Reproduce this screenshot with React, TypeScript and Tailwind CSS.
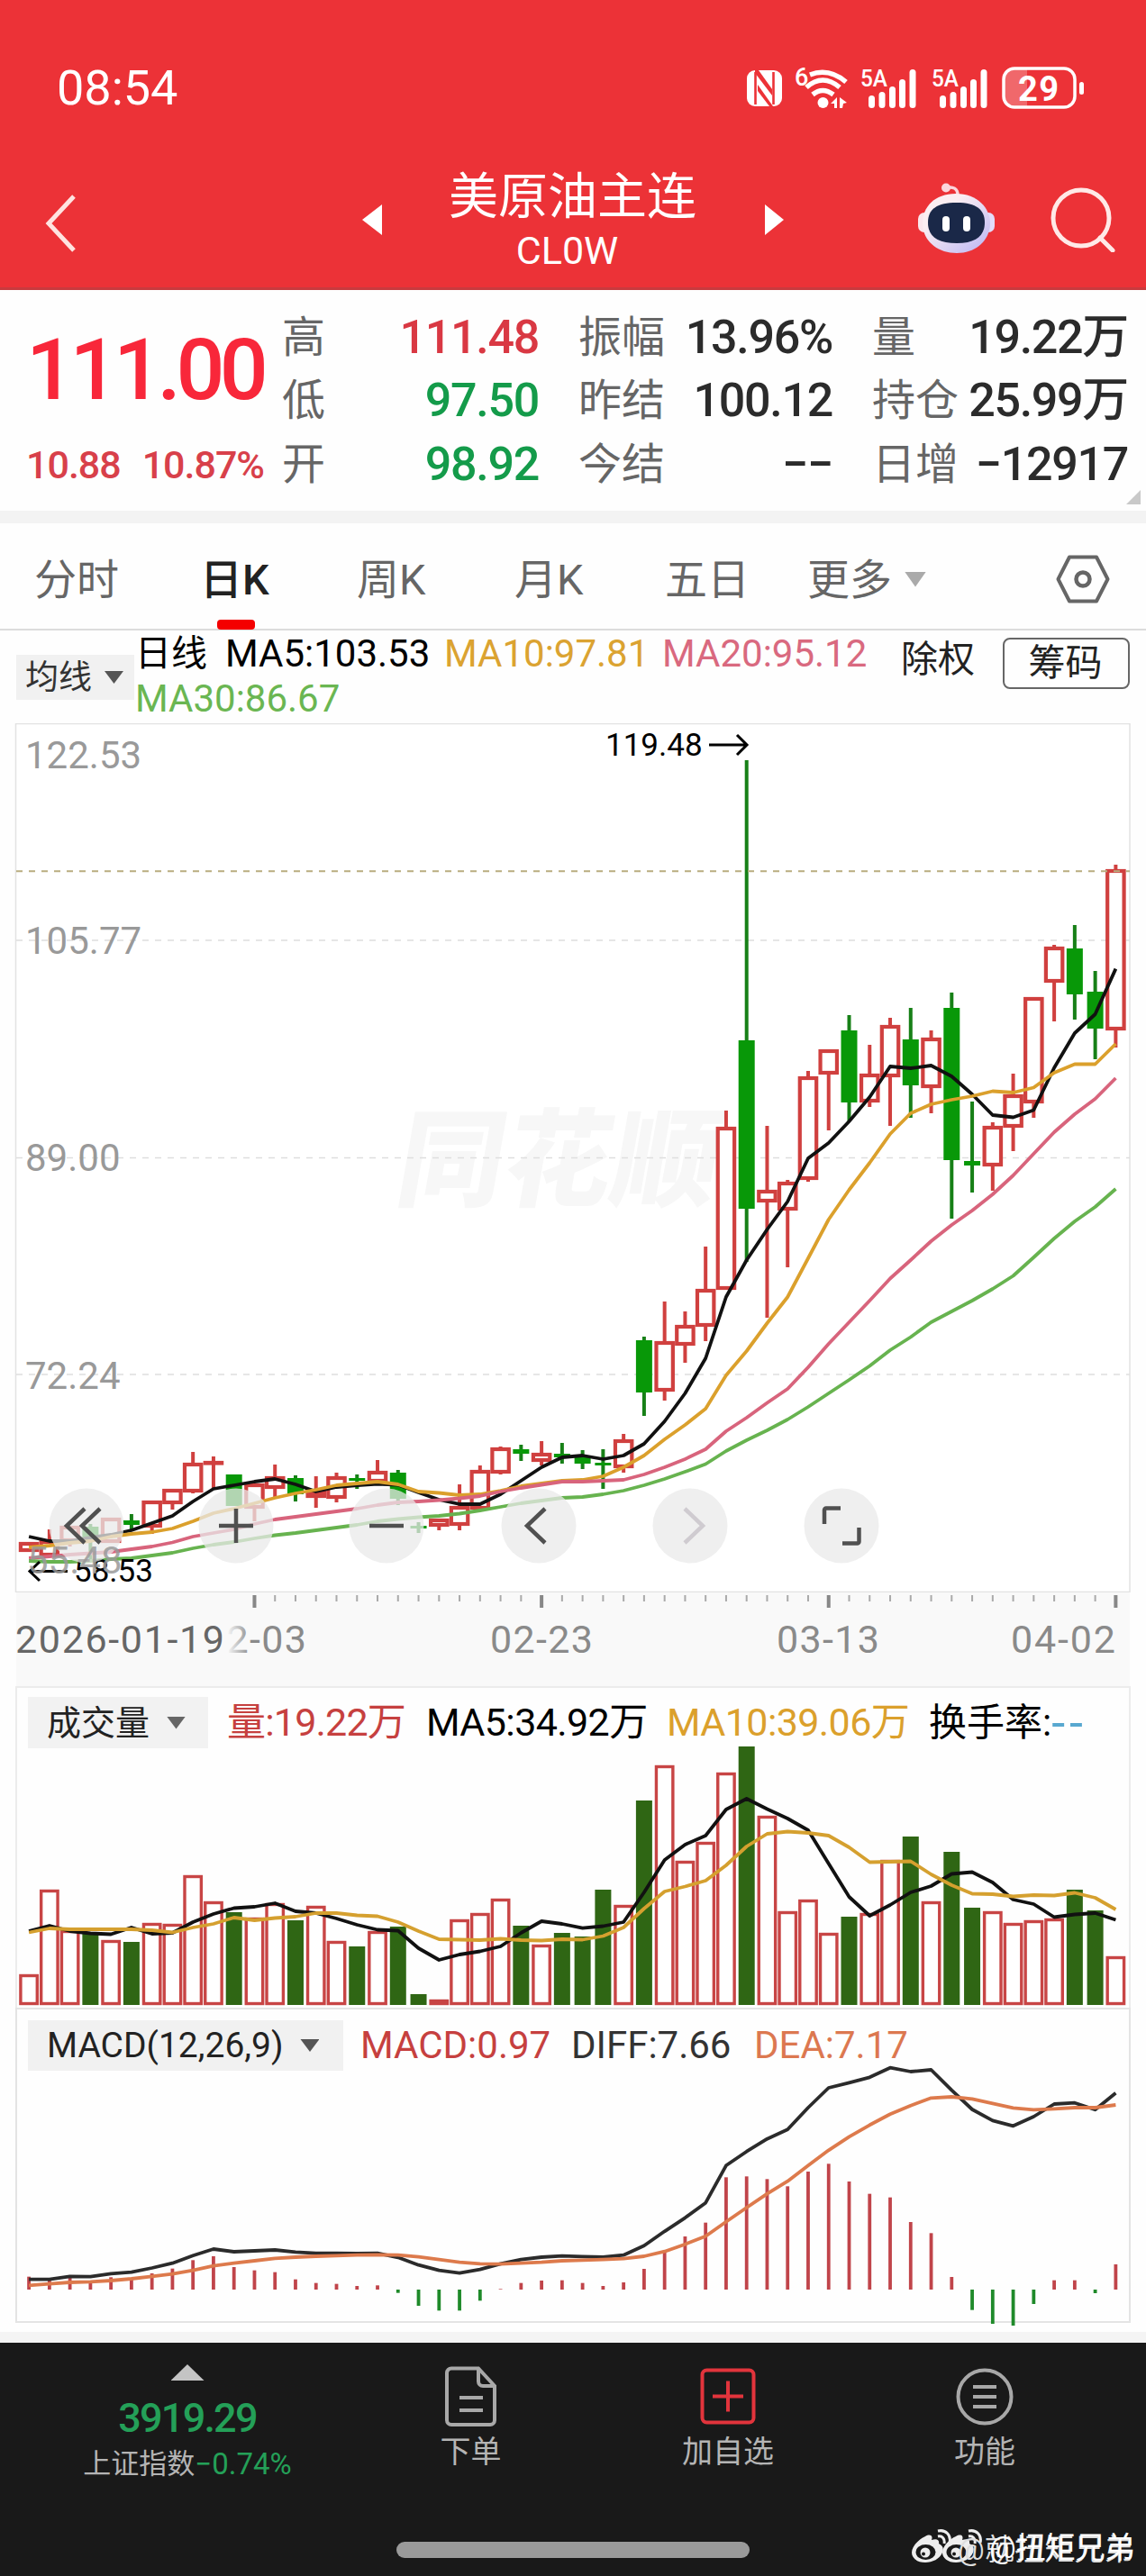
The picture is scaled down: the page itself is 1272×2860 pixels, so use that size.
import React from "react";

const RED = "#d0403f";
const GREEN = "#089808";
const X0 = 32.1;
const STEP = 22.76;

const xAt = (i: number) => X0 + i * STEP;
const toPoints = (ys: number[], scale = 1) => ys.map((y, i) => `${xAt(i).toFixed(1)},${(y * scale).toFixed(1)}`).join(" ");

type Candle = [kind: "r" | "g", high: number, top: number, bottom: number, low: number];

const candles: Candle[] = [
  ["r", 1712, 1712, 1723, 1723], ["r", 1698, 1710, 1728, 1728], ["r", 1694, 1694, 1712, 1717],
  ["g", 1692, 1695, 1710, 1732], ["r", 1685, 1685, 1713, 1713], ["g", 1681, 1688, 1693, 1698],
  ["r", 1666, 1666, 1696, 1703], ["r", 1653, 1653, 1670, 1676], ["r", 1612, 1624, 1657, 1658],
  ["r", 1617, 1622, 1626, 1653], ["g", 1637, 1637, 1672, 1672], ["r", 1647, 1647, 1675, 1689],
  ["r", 1626, 1639, 1653, 1662], ["g", 1638, 1641, 1659, 1667], ["r", 1639, 1655, 1663, 1674],
  ["r", 1635, 1639, 1664, 1668], ["g", 1637, 1641, 1644, 1653], ["r", 1621, 1633, 1646, 1646],
  ["g", 1632, 1635, 1664, 1671], ["g", 1690, 1694, 1697, 1702], ["r", 1686, 1686, 1695, 1699],
  ["r", 1648, 1672, 1694, 1699], ["r", 1627, 1632, 1676, 1676], ["r", 1606, 1607, 1636, 1637],
  ["g", 1604, 1609, 1614, 1622], ["r", 1600, 1613, 1623, 1627], ["g", 1602, 1614, 1618, 1625],
  ["g", 1610, 1617, 1625, 1631], ["g", 1609, 1624, 1627, 1653], ["r", 1592, 1598, 1630, 1635],
  ["g", 1484, 1488, 1546, 1572], ["r", 1445, 1489, 1545, 1555], ["r", 1456, 1471, 1494, 1513],
  ["r", 1384, 1431, 1473, 1489], ["r", 1233, 1251, 1432, 1432], ["g", 844, 1155, 1342, 1401],
  ["r", 1250, 1321, 1335, 1463], ["r", 1310, 1312, 1344, 1407], ["r", 1189, 1195, 1310, 1312],
  ["r", 1165, 1165, 1193, 1255], ["g", 1127, 1144, 1224, 1245], ["r", 1160, 1192, 1224, 1229],
  ["r", 1130, 1138, 1196, 1250], ["g", 1119, 1154, 1205, 1241], ["r", 1144, 1152, 1208, 1236],
  ["g", 1102, 1119, 1288, 1353], ["g", 1223, 1289, 1294, 1324], ["r", 1246, 1250, 1295, 1322],
  ["r", 1192, 1215, 1252, 1278], ["r", 1107, 1107, 1225, 1241], ["r", 1049, 1051, 1091, 1134],
  ["g", 1027, 1053, 1104, 1132], ["g", 1078, 1101, 1142, 1176], ["r", 960, 965, 1144, 1163],
];

const ma5 = [1706, 1711, 1711, 1707, 1704, 1699, 1691, 1683, 1667, 1653, 1649, 1645, 1642, 1648, 1656, 1651, 1649, 1647.5, 1648.5, 1657, 1665, 1670, 1670, 1659, 1644, 1629, 1618, 1616, 1620, 1616, 1603, 1578, 1547, 1508, 1440, 1399, 1365, 1334, 1286, 1269, 1245, 1218, 1184, 1186, 1183, 1195, 1215, 1238, 1240.5, 1232.5, 1185.5, 1147, 1126, 1075.6];
const ma10 = [1718, 1716, 1713, 1711, 1706, 1703, 1701, 1697, 1689, 1680, 1675, 1669, 1663, 1658, 1654, 1649, 1647, 1645, 1648, 1656, 1657.5, 1660, 1659, 1655, 1650, 1647, 1644, 1643, 1639, 1629, 1616, 1598, 1582, 1564, 1527, 1500, 1469, 1440, 1397, 1354, 1321, 1291, 1259, 1236, 1226, 1221, 1217, 1211.5, 1213, 1207.5, 1191, 1181.5, 1181.5, 1159];
const ma20 = [1730, 1728, 1726, 1724.5, 1723, 1720, 1717, 1712.5, 1706, 1702, 1698, 1692, 1687, 1684, 1681, 1678, 1675, 1671, 1668, 1667, 1665.5, 1663.5, 1661, 1656, 1652, 1648.5, 1645, 1645, 1644, 1643, 1637, 1629, 1620, 1609, 1589, 1574, 1557.5, 1542, 1518, 1492, 1468, 1444, 1419.5, 1399, 1378, 1360, 1344, 1326, 1305, 1281, 1257, 1237, 1220, 1197];
const ma30 = [1733, 1734, 1734, 1733, 1731, 1730, 1727, 1724, 1719, 1715, 1712, 1708, 1704.5, 1702, 1699, 1696, 1693, 1689, 1686.5, 1684.5, 1683, 1680.5, 1677, 1673, 1669, 1666, 1663, 1662, 1659, 1655, 1649, 1642, 1634, 1625.5, 1611, 1599, 1588, 1576, 1562, 1547, 1532, 1516.5, 1499, 1484.5, 1468, 1456, 1444, 1431, 1416.5, 1396, 1375, 1356, 1340, 1320];

// top edge of every volume bar, the fill follows volKinds
const volTops = [2192, 2098, 2143, 2147, 2154, 2156, 2135, 2136, 2082, 2111, 2123, 2129, 2113, 2132, 2116, 2155, 2161, 2144, 2139, 2214, 2220, 2131, 2124, 2108, 2138, 2159, 2146, 2150, 2098, 2115, 1999, 1960, 2066, 2045, 1968, 1939, 2016, 2122, 2109, 2146, 2128, 2124, 2065, 2039, 2111, 2056, 2118, 2122, 2135, 2132, 2130, 2098, 2121, 2172];
const volKinds = "rrrgrgrrrrgrrgrrgrggrrrrgrgggrgrrrrgrrrrgrrgrggrrrrggr";
const volMa5 = [2144, 2138, 2144, 2146.5, 2147.5, 2140, 2147, 2146, 2134, 2125, 2118.5, 2117, 2113, 2122, 2124, 2130, 2137, 2142.5, 2143.5, 2163, 2176, 2170, 2166.5, 2161, 2146, 2133, 2136, 2140.7, 2138.5, 2134, 2101, 2065, 2048, 2038, 2009, 1997, 2008.5, 2019, 2032, 2069, 2106, 2127, 2115, 2101, 2094, 2080.5, 2078.5, 2090, 2109, 2114, 2128.5, 2125.5, 2124, 2131.5];
const volMa10 = [2145.5, 2141, 2142, 2142, 2142, 2142, 2143, 2145.5, 2140, 2136, 2129, 2132, 2129.5, 2128, 2124, 2124, 2126.5, 2127.5, 2134, 2144, 2153, 2153.5, 2154, 2152.5, 2154, 2154.5, 2153, 2153.5, 2149.5, 2140, 2119, 2100, 2094.5, 2088, 2071, 2050, 2036, 2033.5, 2035, 2038, 2051, 2067.5, 2067, 2066.5, 2081, 2093, 2102.5, 2103, 2105.5, 2104, 2104.5, 2101.5, 2107, 2120];

// MACD series are kept in thirds of a pixel
const MACD_ZERO = 936;
const macdBars = [893, 900, 893, 912, 895, 898, 882, 866, 838, 825, 861, 872, 878, 902, 914, 917, 924, 922, 947, 990, 1006, 1006, 973, 934, 914, 906, 905, 914, 924, 912, 867, 808, 759, 713, 562, 559, 568, 592, 543, 517, 576, 617, 629, 711, 748, 894, 1004, 1050, 1056, 984, 905, 905, 948, 852];
const diff = [902, 902, 892, 893, 883, 878, 864, 848, 823, 801, 810, 807, 804, 811, 815, 815, 816, 815, 829, 854, 872, 881, 869, 850, 836, 828, 824, 826, 828, 821, 790, 742, 697, 647, 523, 476, 434, 403, 330, 264, 247, 229, 197, 210, 204, 272, 336, 373, 391, 360, 318, 314, 337, 281];
const dea = [922, 917, 912, 910, 906, 900, 892, 884, 872, 857, 848, 840, 832, 828, 825, 823, 821, 820, 821, 827, 836, 845, 850, 851, 848, 845, 840, 838, 836, 833, 825, 809, 785, 758, 710, 663, 617, 575, 523, 472, 427, 388, 352, 323, 298, 294, 301, 316, 331, 337, 334, 330, 330, 321];

function Line({ ys, color, scale }: { ys: number[]; color: string; scale?: number }) {
  return <polyline points={toPoints(ys, scale)} fill="none" stroke={color} strokeWidth={3.8} strokeLinejoin="round" />;
}

function Signal() {
  return (
    <svg width="62" height="46" viewBox="0 0 62 46" fill="#fff" className="overflow-visible">
      <text x="0" y="21" fontSize="26" fontWeight="500" textLength="30" lengthAdjust="spacingAndGlyphs">5A</text>
      <rect x="9" y="31" width="7" height="14" rx="3.5" />
      <rect x="20.5" y="27" width="7" height="18" rx="3.5" />
      <rect x="32" y="21" width="7" height="24" rx="3.5" />
      <rect x="43" y="13" width="7" height="32" rx="3.5" />
      <rect x="54.5" y="2" width="7" height="43" rx="3.5" />
    </svg>
  );
}

function StatusBar() {
  return (
    <div className="flex h-[70px] items-center pl-[63px] text-white">
      <span className="w-[766px] text-[54px] leading-none">08:54</span>
      <svg width="39" height="40" viewBox="0 0 39 40" className="mr-[14px]">
        <rect width="39" height="40" rx="9" fill="#fff" />
        <path d="M9.500 2v36M29.500 2v36" stroke="#ec3237" strokeWidth="2.600" />
        <path d="M9 0h4l15 21v7L9 3Z" fill="#ec3237" />
        <path d="M12 16l17 24h-4L12 23Z" fill="#ec3237" />
      </svg>
      <svg width="60" height="48" viewBox="0 0 60 48" className="mr-[13px] overflow-visible">
        <text x="0" y="21" fontSize="27" fontWeight="500" fill="#fff" textLength="13">6</text>
        <g fill="none" stroke="#fff" strokeWidth="5.5">
          <path d="M17 9Q38 1 57 17" />
          <path d="M13 23Q31 7 50 23" />
          <path d="M20 31Q31 22 43 31" />
        </g>
        <circle cx="31.5" cy="40" r="6" fill="#fff" />
        <path d="M40 41l7-7v12h-3v-5zM50 34l8 6-4 1-1 5h-3z" fill="#fff" />
      </svg>
      <Signal />
      <span className="w-[17px]" />
      <Signal />
      <svg width="92" height="48" viewBox="0 0 92 48" className="ml-[16px]">
        <path d="M14 2h14v44H14A12 12 0 0 1 2 34V14A12 12 0 0 1 14 2Z" fill="#f0686b" />
        <rect x="2" y="2" width="79" height="43" rx="12" fill="none" stroke="#fff" strokeWidth="3.5" />
        <rect x="86" y="17" width="5" height="14" rx="2.5" fill="#fff" />
        <text x="18" y="38" fontSize="38" fontWeight="700" fill="#fff" textLength="45">29</text>
      </svg>
    </div>
  );
}

function RobotIcon() {
  return (
    <svg width="85" height="79" viewBox="0 0 85 79" className="ml-[149px] mb-[3px]">
      <defs>
        <linearGradient id="head" x1="0" y1="0" x2="1" y2="1">
          <stop offset="0.3" stopColor="#fbeef2" />
          <stop offset="1" stopColor="#b9b4f4" />
        </linearGradient>
      </defs>
      <path d="M31 5.5c8-2 13 1 13 8" fill="none" stroke="#fbd5dc" strokeWidth="3.5" />
      <circle cx="31" cy="5.5" r="5" fill="#fbd5dc" />
      <rect x="0" y="33" width="14" height="22" rx="7" fill="#fbe6ec" />
      <rect x="71" y="33" width="14" height="22" rx="7" fill="#e3dcfa" />
      <path d="M42 12C66 12 80 28 80 45S66 78 43 78 5 63 5 45s13-33 37-33Z" fill="url(#head)" />
      <path d="M43 22c22 0 31 8 31 22s-9 23-31 23-32-8-32-23 10-22 32-22Z" fill="#1a2848" />
      <rect x="27" y="37" width="8" height="17" rx="4" fill="#fff" />
      <rect x="50" y="37" width="8" height="17" rx="4" fill="#fff" />
    </svg>
  );
}

function Header() {
  return (
    <header className="h-[322px] border-b-[3px] border-[#c93a3e] bg-[#ec3237] pt-[63px]">
      <StatusBar />
      <div className="mt-[35px] flex h-[151px] items-center pl-[49px] text-white">
        <svg width="36" height="66" viewBox="0 0 36 66" className="mt-[9px]">
          <path d="M33 3L5 33l28 30" fill="none" stroke="#ffe3e0" strokeWidth="5" />
        </svg>
        <svg width="22" height="34" viewBox="0 0 22 34" className="ml-[317px]">
          <path d="M22 0v34L0 17Z" fill="#fff" />
        </svg>
        <div className="flex w-[425px] flex-col items-center pt-[7px]">
          <h1 className="mr-[2px] text-[55px] leading-[62px]">美原油主连</h1>
          <span className="mr-[14px] text-[43px] leading-[58px]">CL0W</span>
        </div>
        <svg width="21" height="34" viewBox="0 0 21 34">
          <path d="M0 0v34l21-17Z" fill="#fff" />
        </svg>
        <RobotIcon />
        <svg width="72" height="72" viewBox="0 0 72 72" className="ml-[62px]" fill="none" stroke="#ffe9e7" strokeWidth="5">
          <circle cx="34" cy="34" r="31" />
          <path d="M55 56L69 70" strokeLinecap="round" />
        </svg>
      </div>
    </header>
  );
}

const stats = [
  { label: "高", value: "111.48", color: "text-[#d93843]" },
  { label: "振幅", value: "13.96%", color: "text-[#2b2b2b]" },
  { label: "量", value: "19.22万", color: "text-[#2b2b2b]" },
  { label: "低", value: "97.50", color: "text-[#149b4a]" },
  { label: "昨结", value: "100.12", color: "text-[#2b2b2b]" },
  { label: "持仓", value: "25.99万", color: "text-[#2b2b2b]" },
  { label: "开", value: "98.92", color: "text-[#149b4a]" },
  { label: "今结", value: "−−", color: "text-[#2b2b2b]" },
  { label: "日增", value: "−12917", color: "text-[#2b2b2b]" },
];

function QuotePanel() {
  return (
    <section className="relative flex h-[245px] pl-[29px] pt-[18px]">
      <div className="w-[284px]">
        <div className="flex h-[140px] items-center whitespace-nowrap text-[95px] font-medium leading-none tracking-[-5.5px] text-[#f8273a]">111.00</div>
        <div className="flex h-[72px] w-[264px] items-center justify-between text-[43px] font-medium leading-none tracking-[-1px] text-[#d8404a]">
          <span>10.88</span>
          <span>10.87%</span>
        </div>
      </div>
      <div className="grid h-[211px] grid-cols-[285px_282px_284px] gap-x-[44px]">
        {stats.map((s) => (
          <div key={s.label} className="flex items-center justify-between whitespace-nowrap leading-none">
            <span className="text-[48px] text-[#666]">{s.label}</span>
            <span className={`text-[52px] font-medium tracking-[-1.3px] ${s.color}`}>{s.value}</span>
          </div>
        ))}
      </div>
      <div className="absolute bottom-[7px] right-[6px] h-[16px] w-[16px] bg-[#c9c9c9] [clip-path:polygon(100%_0,100%_100%,0_100%)]" />
    </section>
  );
}

function Tabs() {
  return (
    <nav className="relative flex h-[119px] items-center border-b-2 border-[#dcdcdc] pl-[38px] pt-[7px] text-[47px] leading-none text-[#666]">
      <span className="w-[184px]">分时</span>
      <span className="w-[174px] font-medium text-[#222]">日K</span>
      <span className="w-[175px]">周K</span>
      <span className="w-[167px]">月K</span>
      <span className="w-[158px]">五日</span>
      <span className="w-[108px]">更多</span>
      <span className="h-[17px] w-[24px] bg-[#aaa] [clip-path:polygon(0_0,100%_0,50%_100%)]" />
      <svg width="60" height="54" viewBox="0 0 60 54" className="ml-[144px]" fill="none" stroke="#666">
        <path d="M15 2.5h30L57.500 27 45 51.500H15L2.500 27Z" strokeWidth="4" strokeLinejoin="round" />
        <circle cx="30" cy="27" r="7.500" strokeWidth="4.500" />
      </svg>
      <div className="absolute bottom-[-1px] left-[241px] h-[11px] w-[42px] rounded-[4px] bg-[#f40000]" />
    </nav>
  );
}

function IndicatorBar() {
  return (
    <div className="flex h-[103px] pl-[18px] text-[42px] leading-none text-black">
      <div className="mt-[27px] flex h-[50px] w-[131px] items-center bg-[#f1f1f1] pl-[10px] text-[37px] text-[#333]">
        均线
        <span className="ml-[14px] h-[14px] w-[21px] bg-[#555] [clip-path:polygon(0_0,100%_0,50%_100%)]" />
      </div>
      <div className="w-[851px] whitespace-nowrap pl-[1px]">
        <div className="flex h-[52px] items-center">
          <span className="w-[100px] text-[40px]">日线</span>
          <span className="w-[243px]">MA5:103.53</span>
          <span className="w-[242px] text-[#dba331]">MA10:97.81</span>
          <span className="text-[#d9697f]">MA20:95.12</span>
        </div>
        <div className="flex h-[47px] items-center text-[#6ab652]">MA30:86.67</div>
      </div>
      <span className="mt-[12px] text-[41px] text-[#222]">除权</span>
      <div className="ml-[31px] mt-[8px] flex h-[57px] w-[141px] items-center justify-center rounded-[8px] border-2 border-[#666] pr-[2px] text-[41px] text-[#222]">筹码</div>
    </div>
  );
}

const axisLabels = [
  { text: "122.53", y: 853 },
  { text: "105.77", y: 1059 },
  { text: "89.00", y: 1300 },
  { text: "72.24", y: 1542 },
];

function ControlButton({ x, dim, children }: { x: number; dim?: boolean; children: React.ReactNode }) {
  return (
    <g transform={`translate(${x} 1694)`} fill="none" stroke={dim ? "#cfcbd0" : "#505050"} strokeWidth="4.500">
      <circle r="41.500" fill="#e9e9e9" fillOpacity="0.75" stroke="none" />
      {children}
    </g>
  );
}

function PriceChart() {
  return (
    <svg width="1272" height="965" viewBox="0 803 1272 965" className="block">
      <rect x="17.500" y="803.500" width="1236.500" height="964" fill="#fff" stroke="#e2e2e2" strokeWidth="1.500" />
      <text transform="translate(436 1330) skewX(-10)" fontSize="118" fontWeight="900" fill="#f7f7f7" textLength="356">同花顺</text>
      {[1044, 1285.5, 1526].map((y) => (
        <path key={y} d={`M18 ${y}H1254`} stroke="#dedede" strokeWidth="1.500" strokeDasharray="7 7" />
      ))}
      {axisLabels.map((l) => (
        <text key={l.text} x="28" y={l.y} fontSize="42" fill="#999">{l.text}</text>
      ))}
      {candles.map(([kind, high, top, bottom, low], i) => {
        const x = xAt(i);
        if (kind === "g") {
          return (
            <g key={i} fill={GREEN}>
              <rect x={x - 2} y={high} width="4" height={low - high} fill="#178017" />
              <rect x={x - 9} y={top} width="18" height={bottom - top} />
            </g>
          );
        }
        return (
          <g key={i} fill={RED}>
            <rect x={x - 2} y={high} width="4" height={top - high} />
            <rect x={x - 2} y={bottom} width="4" height={low - bottom} />
            <rect x={x - 9.2} y={top + 2} width="18.400" height={Math.max(bottom - top - 4, 0.5)} fill="#fff" stroke={RED} strokeWidth="4.200" />
          </g>
        );
      })}
      <Line ys={ma5} color="#111" />
      <Line ys={ma10} color="#dba02c" />
      <Line ys={ma20} color="#d8647c" />
      <Line ys={ma30} color="#67b34f" />
      <path d="M18 967.300H1254" stroke="#b9ad80" strokeWidth="2" strokeDasharray="7 7" />
      <text x="672" y="839" fontSize="35" fill="#000">119.48</text>
      <path d="M787 827H829M818 816l11 11-11 11" fill="none" stroke="#000" strokeWidth="3" />
      <path d="M75 1744.500H33M44 1734l-11 10.500 11 10.500" fill="none" stroke="#000" strokeWidth="3" />
      <text x="82" y="1756" fontSize="35" fill="#000">58.53</text>
      <ControlButton x={96}>
        <path d="M-2-19L-22 0l20 19M15-19L-5 0l20 19" />
      </ControlButton>
      <ControlButton x={262}>
        <path d="M-19 0H19M0-19V19" />
      </ControlButton>
      <ControlButton x={429}>
        <path d="M-19 0H19" />
      </ControlButton>
      <ControlButton x={598}>
        <path d="M7-19L-13 0 7 19" />
      </ControlButton>
      <ControlButton x={766} dim>
        <path d="M-6-19L14 0-6 19" />
      </ControlButton>
      <ControlButton x={934}>
        <path d="M-19-2V-17.500a2 2 0 0 1 2-2H-1M1 19.500H17.500a2 2 0 0 0 2-2V2" />
      </ControlButton>
      <text x="30" y="1747" fontSize="42" fill="#999" fillOpacity="0.85">55.48</text>
    </svg>
  );
}

function DateAxis() {
  return (
    <svg width="1272" height="104" viewBox="0 1768 1272 104" className="block">
      <defs>
        <linearGradient id="fade">
          <stop offset="0.9" stopColor="#f9f9f9" />
          <stop offset="1" stopColor="#f9f9f9" stopOpacity="0" />
        </linearGradient>
      </defs>
      <rect x="18" y="1768" width="1236" height="104" fill="#f9f9f9" />
      {candles.map((_, i) => {
        const major = i === 11 || i === 25 || i === 39 || i === 53;
        if (i < 11) return null;
        return <rect key={i} x={xAt(i) - (major ? 2 : 1)} y="1771" width={major ? 4 : 2} height={major ? 14 : 7} fill={major ? "#888" : "#aaa"} />;
      })}
      <g fontSize="43" fill="#8a8a8a">
        <text x="226" y="1835" textLength="114">02-03</text>
        <text x="544" y="1835" textLength="114">02-23</text>
        <text x="862" y="1835" textLength="114">03-13</text>
        <text x="1122" y="1835" textLength="116">04-02</text>
      </g>
      <rect x="18" y="1787" width="260" height="70" fill="url(#fade)" />
      <text x="17" y="1835" fontSize="43" fill="#666" textLength="232">2026-01-19</text>
    </svg>
  );
}

function VolumePanel() {
  return (
    <section className="mx-[17px] h-[357px] border-2 border-b-0 border-[#ececec]">
      <div className="flex h-[63px] items-center whitespace-nowrap pl-[12px] pt-[14px] text-[43px] leading-none">
        <div className="flex h-[57px] w-[200px] shrink-0 items-center bg-[#f2f2f2] pl-[21px] text-[38px] text-[#222]">
          成交量
          <span className="ml-[19px] h-[14px] w-[21px] bg-[#666] [clip-path:polygon(0_0,100%_0,50%_100%)]" />
        </div>
        <span className="ml-[21px] w-[221px] tracking-[-0.8px] text-[#c6403f]">量:19.22万</span>
        <span className="w-[267px] tracking-[-0.6px] text-black">MA5:34.92万</span>
        <span className="w-[291px] tracking-[-0.6px] text-[#dba02c]">MA10:39.06万</span>
        <span className="text-[42px] text-black">换手率:</span>
        <span className="text-[54px] tracking-[5px] text-[#58a8d0]">--</span>
      </div>
      <svg width="1272" height="292" viewBox="0 1937 1272 292" className="ml-[-19px] block">
        {volTops.map((top, i) =>
          volKinds[i] === "g" ? (
            <rect key={i} x={xAt(i) - 9} y={top} width="18" height={2226 - top} fill="#2f6614" />
          ) : (
            <rect key={i} x={xAt(i) - 9.2} y={top + 1.5} width="18.400" height={2224.5 - top - 1.5} fill="#fff" stroke="#c84545" strokeWidth="3.400" />
          )
        )}
        <Line ys={volMa5} color="#111" />
        <Line ys={volMa10} color="#d5a02f" />
      </svg>
    </section>
  );
}

function MacdPanel() {
  return (
    <section className="mx-[17px] h-[350px] border-2 border-[#e4e4e4]">
      <div className="flex h-[68px] items-center whitespace-nowrap pl-[12px] pt-[12px] text-[42px] leading-none">
        <div className="flex h-[56px] w-[350px] shrink-0 items-center bg-[#f1f1f1] pl-[21px] text-[39px] text-[#222]">
          MACD(12,26,9)
          <span className="ml-[19px] h-[14px] w-[21px] bg-[#555] [clip-path:polygon(0_0,100%_0,50%_100%)]" />
        </div>
        <span className="ml-[19px] w-[234px] text-[#c6403f]">MACD:0.97</span>
        <span className="w-[203px] text-[#333]">DIFF:7.66</span>
        <span className="text-[#dc7850]">DEA:7.17</span>
      </div>
      <svg width="1272" height="286" viewBox="0 69 1272 286" className="ml-[-19px] block overflow-visible">
        {macdBars.map((end, i) => (
          <rect
            key={i}
            x={xAt(i) - 1.9}
            y={Math.min(end, MACD_ZERO) / 3}
            width="3.800"
            height={Math.abs(end - MACD_ZERO) / 3}
            fill={end > MACD_ZERO ? "#1f8a2a" : "#c0444a"}
          />
        ))}
        <Line ys={diff} color="#2b2b2b" scale={1 / 3} />
        <Line ys={dea} color="#dd7a4c" scale={1 / 3} />
      </svg>
    </section>
  );
}

function WeiboEye() {
  return (
    <svg width="44" height="38" viewBox="0 0 44 38" className="-mr-[10px]">
      <path d="M15 8C20 5 24 7 22 12c6-2 9 0 8 4 4 2 6 5 4 10-3 7-11 11-19 11C6 37 0 32 0 26 0 19 8 11 15 8Z" fill="#eee" />
      <ellipse cx="15.500" cy="25.500" rx="11" ry="8.500" fill="#191919" />
      <circle cx="15" cy="26" r="5.500" fill="#eee" />
      <circle cx="13" cy="27.500" r="2" fill="#191919" />
      <path d="M29 8c5-1 8 3 7 8M29 2c9-2 15 5 13 13" fill="none" stroke="#eee" strokeWidth="3" />
    </svg>
  );
}

function BottomBar() {
  return (
    <footer className="relative h-[259px] bg-[#191919] text-[34px] leading-none text-[#b4b4b4]">
      <div className="flex h-[160px]">
        <div className="flex w-[416px] flex-col items-center pt-[24px]">
          <span className="h-[18px] w-[37px] bg-[#c4c4c4] [clip-path:polygon(50%_0,100%_100%,0_100%)]" />
          <span className="mt-[17px] text-[45px] font-medium leading-[50px] tracking-[-1.8px] text-[#24a058]">3919.29</span>
          <span className="mt-[7px] flex items-center whitespace-nowrap text-[31px] leading-[38px]">
            上证指数<span className="text-[33px] text-[#24a058]">−0.74%</span>
          </span>
        </div>
        <div className="flex w-[213px] flex-col items-center pt-[26px]">
          <svg width="58" height="68" viewBox="0 0 58 68" fill="none" stroke="#a8a8a8" strokeWidth="4">
            <path d="M7 2.500H37L55 22V60a5 5 0 0 1-5 5H7a5 5 0 0 1-5-5V7.500a5 5 0 0 1 5-5Z" />
            <path d="M37 3v14a5 5 0 0 0 5 5h13M16 35h26M16 49h26" />
          </svg>
          <span className="mt-[10px]">下单</span>
        </div>
        <div className="flex w-[358px] flex-col items-center pt-[28px]">
          <svg width="62" height="63" viewBox="0 0 62 63" fill="none" stroke="#e2343c" strokeWidth="4">
            <rect x="2.500" y="2.500" width="57" height="58" rx="5" />
            <path d="M14 31.500h34M31 14.500v34" />
          </svg>
          <span className="mt-[13px]">加自选</span>
        </div>
        <div className="flex w-[212px] flex-col items-center pt-[28px]">
          <svg width="64" height="64" viewBox="0 0 64 64" fill="none" stroke="#a8a8a8" strokeWidth="4">
            <circle cx="32" cy="32" r="29.500" />
            <path d="M19 21h26M19 32h26M19 43h26" />
          </svg>
          <span className="mt-[12px]">功能</span>
        </div>
      </div>
      <div className="mx-auto mt-[61px] h-[18px] w-[392px] rounded-full bg-[#9a9a9a]" />
      <div className="absolute left-[1012px] top-[207px] flex">
        <WeiboEye />
        <WeiboEye />
      </div>
      <span className="absolute left-[1063px] top-[213px] whitespace-nowrap text-[33px] tracking-[0.2px] text-[#dedede]">@就扭矩兄弟</span>
      <span className="absolute left-[1098px] top-[211px] whitespace-nowrap text-[33px] text-white">@扭矩兄弟</span>
    </footer>
  );
}

export default function App() {
  return (
    <div className="h-[2860px] w-[1272px] overflow-hidden bg-[#fefefe] font-['Roboto','Noto_Sans_CJK_SC',sans-serif]">
      <Header />
      <QuotePanel />
      <div className="h-[14px] bg-[#f3f3f3]" />
      <Tabs />
      <IndicatorBar />
      <PriceChart />
      <DateAxis />
      <VolumePanel />
      <MacdPanel />
      <div className="mt-[10px] h-[12px] bg-[#f4f4f4]" />
      <BottomBar />
    </div>
  );
}
